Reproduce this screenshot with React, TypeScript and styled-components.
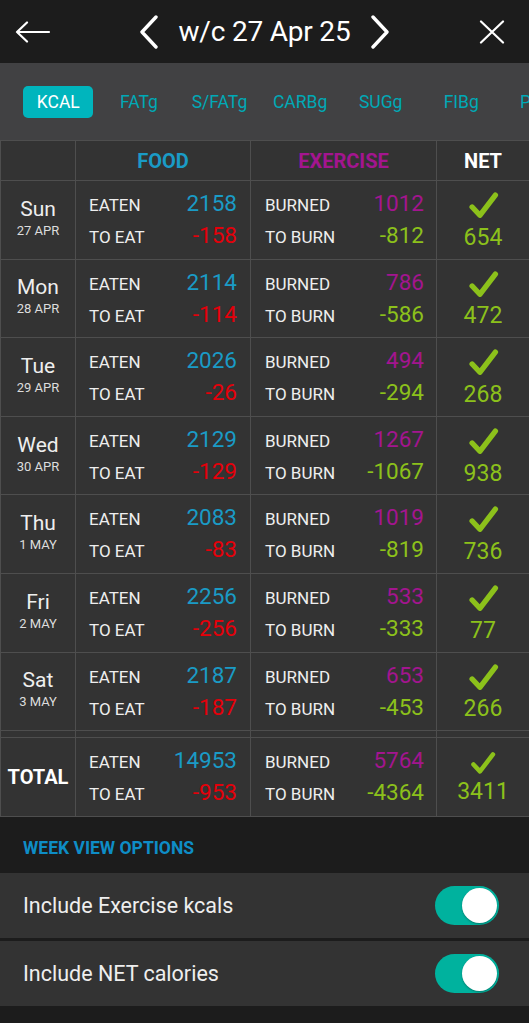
import styled, { createGlobalStyle } from "styled-components";

const GlobalStyle = createGlobalStyle`
  html, body {
    margin: 0;
    padding: 0;
    background: #1c1c1c;
  }
  body {
    font-family: Roboto, "Noto Sans", sans-serif;
    color: #eeeeee;
    width: 529px;
    height: 1023px;
    overflow: hidden;
  }
`;

interface DayRow {
  day: string;
  date: string;
  eaten: number;
  toEat: number;
  burned: number;
  toBurn: number;
  net: number;
}

const days: DayRow[] = [
  { day: "Sun", date: "27 APR", eaten: 2158, toEat: -158, burned: 1012, toBurn: -812, net: 654 },
  { day: "Mon", date: "28 APR", eaten: 2114, toEat: -114, burned: 786, toBurn: -586, net: 472 },
  { day: "Tue", date: "29 APR", eaten: 2026, toEat: -26, burned: 494, toBurn: -294, net: 268 },
  { day: "Wed", date: "30 APR", eaten: 2129, toEat: -129, burned: 1267, toBurn: -1067, net: 938 },
  { day: "Thu", date: "1 MAY", eaten: 2083, toEat: -83, burned: 1019, toBurn: -819, net: 736 },
  { day: "Fri", date: "2 MAY", eaten: 2256, toEat: -256, burned: 533, toBurn: -333, net: 77 },
  { day: "Sat", date: "3 MAY", eaten: 2187, toEat: -187, burned: 653, toBurn: -453, net: 266 },
];

const tabs = ["KCAL", "FATg", "S/FATg", "CARBg", "SUGg", "FIBg", "PROg"];

const colors = {
  food: "#1a9bc6",
  over: "#e5000a",
  exercise: "#a3158f",
  good: "#8cc11b",
  line: "#4e4e4e",
  cell: "#333333",
};

export default function App() {
  return (
    <>
      <GlobalStyle />
      <Page>
        <Header>
          <IconButton $side="left" aria-label="Back">
            <svg width="36" height="22" viewBox="0 0 36 22" fill="none" stroke="#fff" strokeWidth="2.2" strokeLinecap="round" strokeLinejoin="round">
              <path d="M2 11 H34 M12 1.5 L2 11 L12 20.5" />
            </svg>
          </IconButton>
          <WeekNav>
            <svg width="20" height="34" viewBox="0 0 20 34" fill="none" stroke="#fff" strokeWidth="3.4" strokeLinecap="round" strokeLinejoin="round">
              <path d="M17 2 L3 17 L17 32" />
            </svg>
            <Title>w/c 27 Apr 25</Title>
            <svg width="20" height="34" viewBox="0 0 20 34" fill="none" stroke="#fff" strokeWidth="3.4" strokeLinecap="round" strokeLinejoin="round">
              <path d="M3 2 L17 17 L3 32" />
            </svg>
          </WeekNav>
          <IconButton $side="right" aria-label="Close">
            <svg width="26" height="24" viewBox="0 0 26 24" fill="none" stroke="#fff" strokeWidth="2.2" strokeLinecap="round">
              <path d="M2 1.5 L24 22.5 M24 1.5 L2 22.5" />
            </svg>
          </IconButton>
        </Header>

        <TabBar>
          {tabs.map((t, i) => (
            <Tab key={t} $active={i === 0}>
              <span>{t}</span>
            </Tab>
          ))}
        </TabBar>

        <Table>
          <HeadCell />
          <HeadCell $color={colors.food}>FOOD</HeadCell>
          <HeadCell $color={colors.exercise}>EXERCISE</HeadCell>
          <HeadCell $color="#ffffff">NET</HeadCell>

          {days.map((d) => (
            <Row key={d.day}>
              <DayCell>
                <DayName>{d.day}</DayName>
                <DayDate>{d.date}</DayDate>
              </DayCell>
              <PairCell $pl={13} $pr={13}>
                <Line>
                  <Label>EATEN</Label>
                  <Value $color={colors.food}>{d.eaten}</Value>
                </Line>
                <Line>
                  <Label>TO EAT</Label>
                  <Value $color={colors.over}>{d.toEat}</Value>
                </Line>
              </PairCell>
              <PairCell $pl={14} $pr={12}>
                <Line>
                  <Label>BURNED</Label>
                  <Value $color={colors.exercise}>{d.burned}</Value>
                </Line>
                <Line>
                  <Label>TO BURN</Label>
                  <Value $color={colors.good}>{d.toBurn}</Value>
                </Line>
              </PairCell>
              <NetCell>
                <Check size={31} />
                <NetValue $gap={5}>{d.net}</NetValue>
              </NetCell>
            </Row>
          ))}

          <SpacerCell />
          <SpacerCell />
          <SpacerCell />
          <SpacerCell />

          <Row>
            <DayCell>
              <TotalLabel>TOTAL</TotalLabel>
            </DayCell>
            <PairCell $pl={13} $pr={13}>
              <Line>
                <Label>EATEN</Label>
                <Value $color={colors.food}>14953</Value>
              </Line>
              <Line>
                <Label>TO EAT</Label>
                <Value $color={colors.over}>-953</Value>
              </Line>
            </PairCell>
            <PairCell $pl={14} $pr={12}>
              <Line>
                <Label>BURNED</Label>
                <Value $color={colors.exercise}>5764</Value>
              </Line>
              <Line>
                <Label>TO BURN</Label>
                <Value $color={colors.good}>-4364</Value>
              </Line>
            </PairCell>
            <NetCell $top={13}>
              <Check size={26} />
              <NetValue $gap={3}>3411</NetValue>
            </NetCell>
          </Row>
        </Table>

        <SectionTitle>WEEK VIEW OPTIONS</SectionTitle>
        <OptionList>
          <Option>
            <OptionText>Include Exercise kcals</OptionText>
            <Switch $on />
          </Option>
          <Option>
            <OptionText>Include NET calories</OptionText>
            <Switch $on />
          </Option>
        </OptionList>
      </Page>
    </>
  );
}

const Check = ({ size }: { size: number }) => (
  <svg width={size} height={size * 0.9} viewBox="0 0 30 27" fill="none" stroke={colors.good} strokeWidth="5.2" strokeLinecap="round" strokeLinejoin="round">
    <path d="M4 15.5 L11.5 23.5 L26.5 4" />
  </svg>
);

const Page = styled.div`
  width: 529px;
  display: flex;
  flex-direction: column;
`;

const Header = styled.header`
  height: 63px;
  background: #1c1c1c;
  display: grid;
  grid-template-columns: 1fr auto 1fr;
  align-items: center;
`;

const IconButton = styled.div<{ $side: "left" | "right" }>`
  display: flex;
  justify-self: ${(p) => (p.$side === "left" ? "start" : "end")};
  padding: ${(p) => (p.$side === "left" ? "0 0 0 15px" : "0 24px 0 0")};
`;

const WeekNav = styled.div`
  display: flex;
  align-items: center;
  gap: 20px;
`;

const Title = styled.h1`
  margin: 0;
  font-size: 28px;
  font-weight: 400;
  color: #ffffff;
  letter-spacing: -0.2px;
`;

const TabBar = styled.nav`
  height: 77px;
  background: #414143;
  display: flex;
  align-items: center;
  padding-left: 18px;
  overflow: hidden;
`;

const Tab = styled.div<{ $active?: boolean }>`
  flex: 0 0 80.6px;
  display: flex;
  justify-content: center;

  span {
    display: inline-flex;
    align-items: center;
    justify-content: center;
    height: 32px;
    width: ${(p) => (p.$active ? "70px" : "auto")};
    border-radius: 5px;
    font-size: 17.5px;
    color: ${(p) => (p.$active ? "#ffffff" : "#00a9b6")};
    background: ${(p) => (p.$active ? "#00b5bd" : "transparent")};
  }
`;

const Table = styled.section`
  display: grid;
  grid-template-columns: 75px 175px 186px 93px;
  background: ${colors.cell};
  border-top: 1px solid ${colors.line};
  border-left: 1px solid ${colors.line};
`;

const Row = styled.div`
  display: contents;
`;

const Cell = styled.div`
  box-sizing: border-box;
  border-right: 1px solid ${colors.line};
  border-bottom: 1px solid ${colors.line};
  height: 78.6px;
`;

const HeadCell = styled(Cell)<{ $color?: string }>`
  height: 40px;
  display: flex;
  align-items: center;
  justify-content: center;
  font-size: 20px;
  font-weight: 700;
  color: ${(p) => p.$color ?? "#fff"};
`;

const SpacerCell = styled(Cell)`
  height: 7px;
`;

const DayCell = styled(Cell)`
  display: flex;
  flex-direction: column;
  align-items: center;
  justify-content: center;
  padding-bottom: 4px;
`;

const DayName = styled.div`
  font-size: 21px;
  line-height: 25px;
  color: #eeeeee;
`;

const DayDate = styled.div`
  font-size: 13px;
  line-height: 17px;
  color: #dddddd;
`;

const TotalLabel = styled.div`
  font-size: 20px;
  font-weight: 700;
  color: #ffffff;
  padding-top: 4px;
`;

const PairCell = styled(Cell)<{ $pl: number; $pr: number }>`
  padding: 6px ${(p) => p.$pr}px 0 ${(p) => p.$pl}px;
  display: flex;
  flex-direction: column;
`;

const Line = styled.div`
  display: flex;
  justify-content: space-between;
  align-items: baseline;
  height: 32px;
  line-height: 32px;
`;

const Label = styled.span`
  font-size: 17px;
  color: #eeeeee;
`;

const Value = styled.span<{ $color: string }>`
  font-size: 22.5px;
  color: ${(p) => p.$color};
`;

const NetCell = styled(Cell)<{ $top?: number }>`
  display: flex;
  flex-direction: column;
  align-items: center;
  padding-top: ${(p) => p.$top ?? 10}px;
`;

const NetValue = styled.div<{ $gap: number }>`
  margin-top: ${(p) => p.$gap}px;
  font-size: 23px;
  line-height: 28px;
  color: ${colors.good};
`;

const SectionTitle = styled.h2`
  margin: 0;
  height: 56px;
  box-sizing: border-box;
  padding: 6px 23px 0;
  display: flex;
  align-items: center;
  font-size: 17.5px;
  font-weight: 700;
  color: #0e8dc6;
`;

const OptionList = styled.div`
  display: flex;
  flex-direction: column;
  gap: 3px;
`;

const Option = styled.div`
  height: 65px;
  background: ${colors.cell};
  display: flex;
  align-items: center;
  justify-content: space-between;
  padding: 0 30px 0 23px;
`;

const OptionText = styled.span`
  font-size: 21.5px;
  color: #eeeeee;
`;

const Switch = styled.div<{ $on?: boolean }>`
  position: relative;
  width: 64px;
  height: 39px;
  border-radius: 20px;
  background: ${(p) => (p.$on ? "#00b29e" : "#777")};

  &::after {
    content: "";
    position: absolute;
    top: 2px;
    left: ${(p) => (p.$on ? "27px" : "2px")};
    width: 35px;
    height: 35px;
    border-radius: 50%;
    background: #ffffff;
    box-shadow: 0 1px 2px rgba(0, 0, 0, 0.3);
  }
`;
